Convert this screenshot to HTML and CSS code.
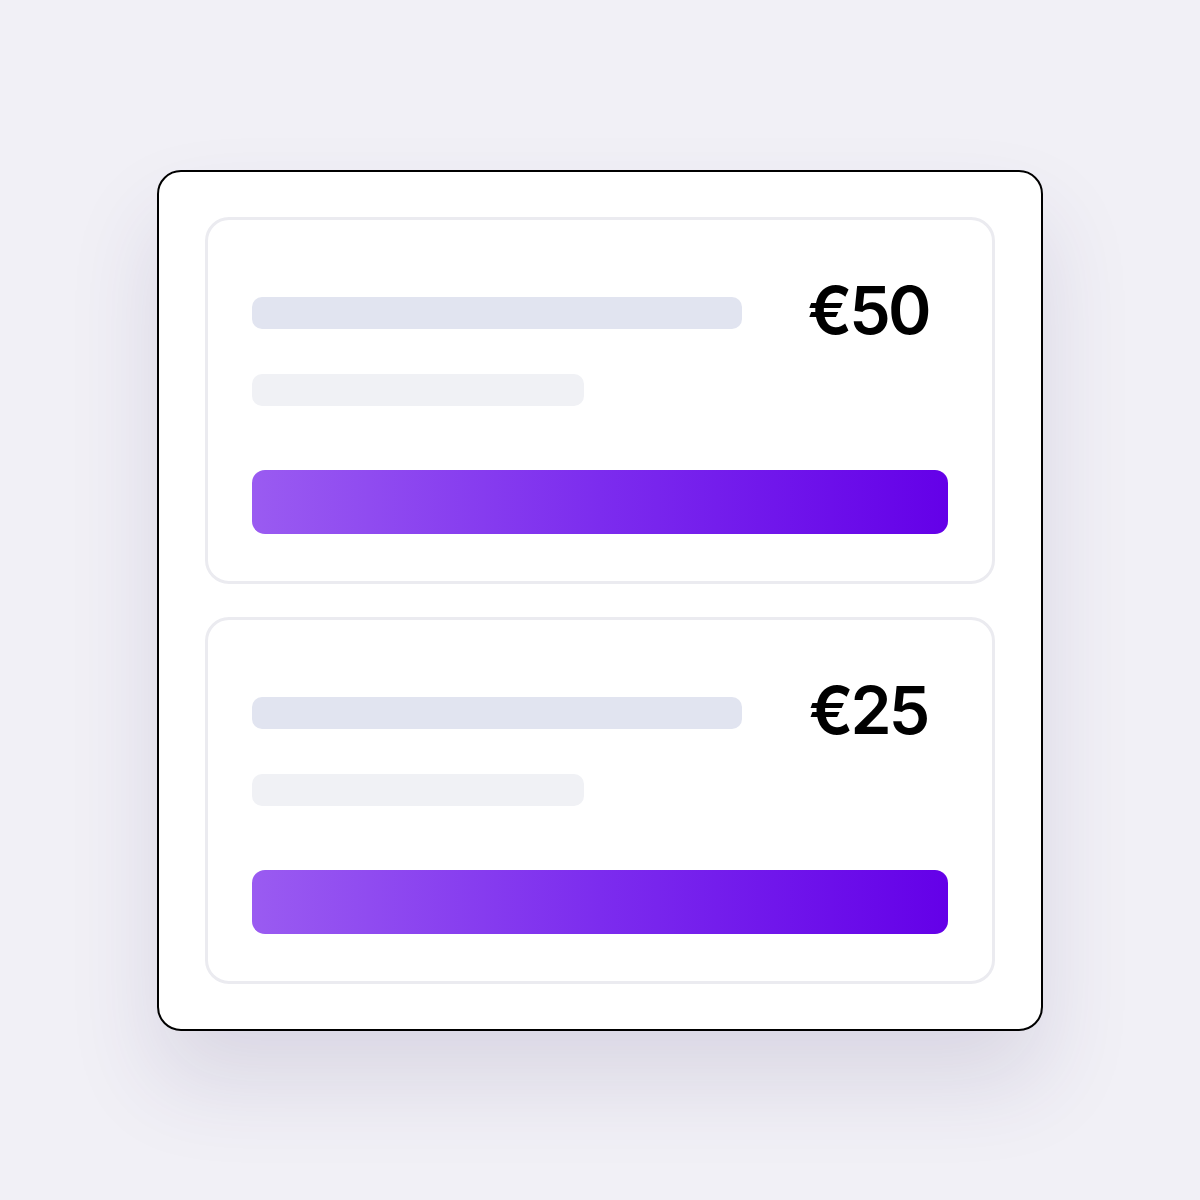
FILE: index.html
```html
<!DOCTYPE html>
<html lang="en">
<head>
<meta charset="utf-8">
<title>Gift cards</title>
<link rel="stylesheet" href="styles.css">
</head>
<body>
  <main class="panel">
    <section class="offer">
      <div class="offer-head">
        <div class="line line-title"></div>
        <div class="price">€50</div>
      </div>
      <div class="line line-sub"></div>
      <div class="cta"></div>
    </section>
    <section class="offer">
      <div class="offer-head">
        <div class="line line-title"></div>
        <div class="price">€25</div>
      </div>
      <div class="line line-sub"></div>
      <div class="cta"></div>
    </section>
  </main>
</body>
</html>
```
FILE: styles.css
```css
* { box-sizing: border-box; }

html, body {
  margin: 0;
  height: 100%;
}

body {
  background: #f1f0f6;
  display: flex;
  align-items: center;
  justify-content: center;
  font-family: Inter, "Noto Sans", sans-serif;
}

.panel {
  width: 886px;
  background: #ffffff;
  border: 2px solid #000000;
  border-radius: 24px;
  padding: 45px 46px;
  display: flex;
  flex-direction: column;
  gap: 33px;
  box-shadow: 0 50px 90px rgba(60, 45, 110, 0.13);
}

.offer {
  border: 3px solid #ebebf0;
  border-radius: 24px;
  padding: 53px 44px 47px;
  display: flex;
  flex-direction: column;
}

.offer-head {
  display: flex;
  align-items: center;
  height: 80px;
}

.line {
  height: 32px;
  border-radius: 10px;
}

.line-title {
  width: 490px;
  background: #e1e4f0;
}

.line-sub {
  width: 332px;
  margin-top: 21px;
  background: #f0f1f5;
}

.price {
  flex: 1;
  text-align: center;
  padding-left: 46px;
  margin-bottom: 6px;
  font-size: 66px;
  line-height: 80px;
  font-weight: 600;
  color: #000000;
  letter-spacing: -0.045em;
}

.cta {
  margin-top: 64px;
  height: 64px;
  border-radius: 13px;
  background: linear-gradient(90deg, #9a5bf1 0%, #7c2cee 50%, #6400e8 100%);
}
```
